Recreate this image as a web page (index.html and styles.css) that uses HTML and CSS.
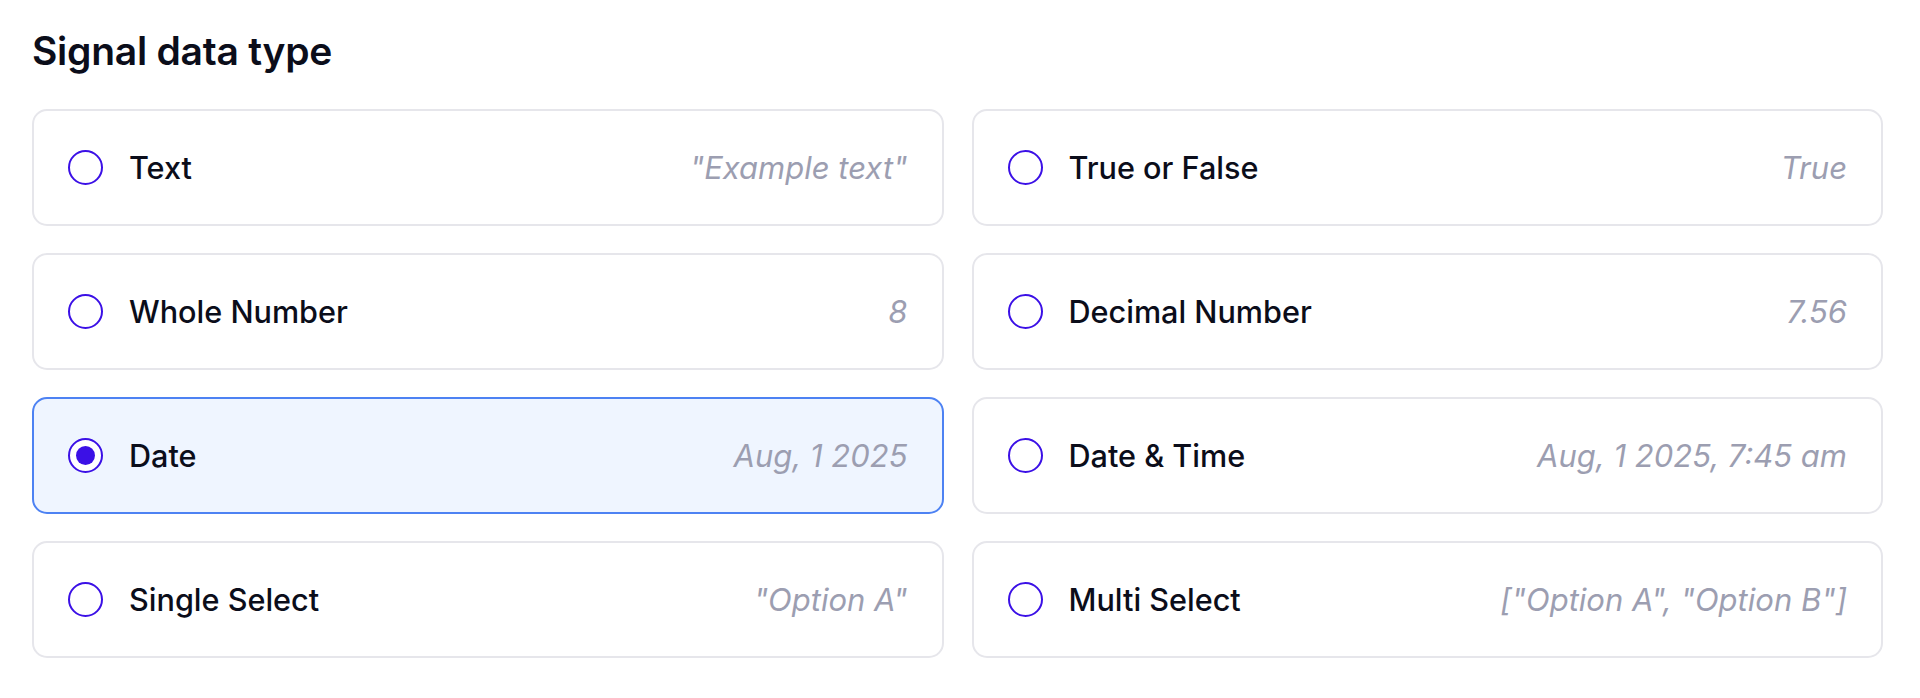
FILE: index.html
```html
<!DOCTYPE html>
<html lang="en">
<head>
<meta charset="utf-8">
<title>Signal data type</title>
<link rel="stylesheet" href="styles.css">
</head>
<body>
<section class="panel">
  <h2 class="title">Signal data type</h2>
  <div class="options">
    <label class="option"><span class="radio"></span><span class="name">Text</span><span class="example">"Example text"</span></label>
    <label class="option"><span class="radio"></span><span class="name">True or False</span><span class="example">True</span></label>
    <label class="option"><span class="radio"></span><span class="name">Whole Number</span><span class="example">8</span></label>
    <label class="option"><span class="radio"></span><span class="name">Decimal Number</span><span class="example">7.56</span></label>
    <label class="option selected"><span class="radio checked"></span><span class="name">Date</span><span class="example">Aug, 1 2025</span></label>
    <label class="option"><span class="radio"></span><span class="name">Date &amp; Time</span><span class="example">Aug, 1 2025, 7:45 am</span></label>
    <label class="option"><span class="radio"></span><span class="name">Single Select</span><span class="example">"Option A"</span></label>
    <label class="option"><span class="radio"></span><span class="name">Multi Select</span><span class="example">["Option A", "Option B"]</span></label>
  </div>
</section>
</body>
</html>
```
FILE: styles.css
```css
html, body {
  margin: 0;
  background: #ffffff;
}
body {
  font-family: Inter, "Noto Sans", "Liberation Sans", sans-serif;
  color: #0b0d1a;
}
.panel {
  padding: 23px 37px 0 32px;
}
.title {
  margin: 0 0 30px 0;
  font-size: 39px;
  line-height: 56px;
  font-weight: 600;
  letter-spacing: -0.25px;
  color: #0b0d1a;
}
.options {
  display: grid;
  grid-template-columns: 1fr 1fr;
  column-gap: 28px;
  row-gap: 27px;
}
.option {
  display: flex;
  align-items: center;
  height: 117px;
  box-sizing: border-box;
  padding: 0 34px;
  border: 2px solid #e6e6eb;
  border-radius: 15px;
  background: #ffffff;
}
.option.selected {
  background: #eff5ff;
  border-color: #4d82f3;
}
.radio {
  width: 35px;
  height: 35px;
  box-sizing: border-box;
  border: 2.5px solid #3b10e6;
  border-radius: 50%;
  flex: none;
  display: flex;
  align-items: center;
  justify-content: center;
  background: #ffffff;
}
.radio.checked::after {
  content: "";
  width: 19px;
  height: 19px;
  border-radius: 50%;
  background: #3b10e6;
}
.name {
  margin-left: 26px;
  font-size: 30.6px;
  font-weight: 500;
  color: #0b0d1a;
}
.example {
  margin-left: auto;
  font-size: 31px;
  font-style: italic;
  color: #9c9eb1;
}
```
